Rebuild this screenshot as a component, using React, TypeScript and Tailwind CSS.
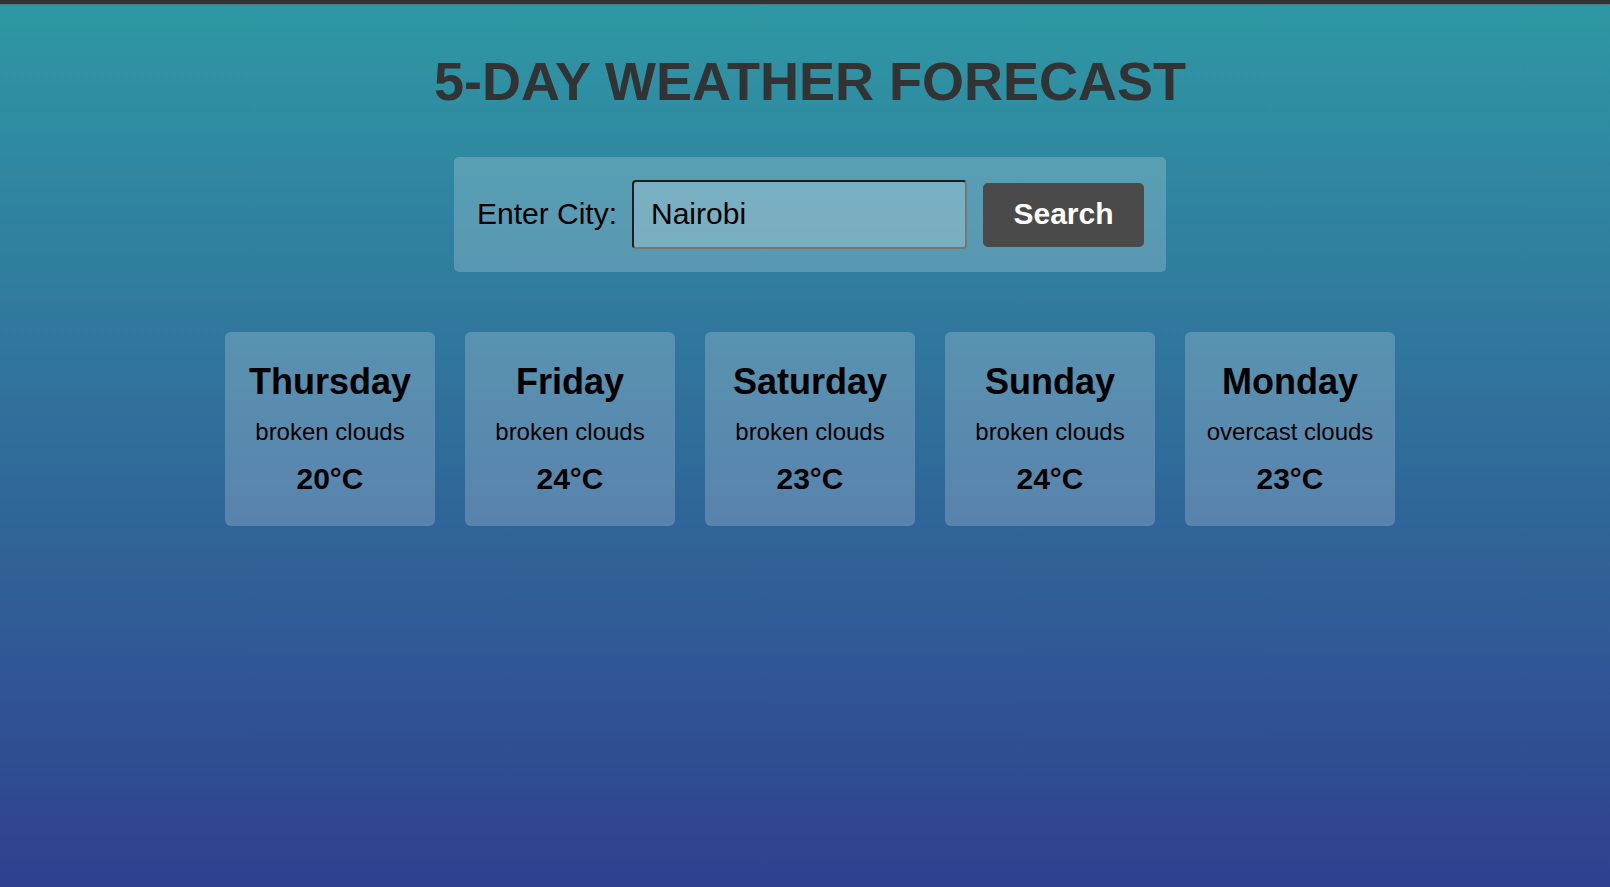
import React from "react";

const days = [
  { day: "Thursday", desc: "broken clouds", temp: "20°C" },
  { day: "Friday", desc: "broken clouds", temp: "24°C" },
  { day: "Saturday", desc: "broken clouds", temp: "23°C" },
  { day: "Sunday", desc: "broken clouds", temp: "24°C" },
  { day: "Monday", desc: "overcast clouds", temp: "23°C" },
];

export default function App() {
  return (
    <div
      className="min-h-screen w-full bg-gradient-to-b from-[#2e98a4] to-[#2f408e] text-black"
      style={{ fontFamily: '"Liberation Sans", Arial, sans-serif' }}
    >
      <div className="h-[4px] bg-[#333333]" />
      <div className="h-px bg-[#4e7a80]" />
      <div className="flex flex-col items-center pl-[10px]">
        <h1 className="mt-[45px] text-[54px] leading-[1.15] font-bold text-[#333333]">
          5-DAY WEATHER FORECAST
        </h1>
        <div className="mt-[45px] flex items-center rounded-[5px] bg-white/20 p-[23px] pr-[22px]">
          <label className="text-[30px] leading-[1.15]">Enter City:</label>
          <div className="ml-[15px] flex h-[69px] w-[335px] items-center rounded-[4px] border-2 border-t-[#1e1e1e] border-l-[#1e1e1e] border-b-[#767676] border-r-[#767676] bg-white/20 pl-[17px] text-[30px] leading-[1.15]">
            Nairobi
          </div>
          <button className="ml-[16px] flex h-[64px] w-[161px] items-center justify-center rounded-[5px] bg-[#4a4a4a] text-[30px] leading-[1.15] font-bold text-white">
            Search
          </button>
        </div>
        <div className="mt-[60px] flex gap-[30px]">
          {days.map((d) => (
            <div
              key={d.day}
              className="flex h-[194px] w-[210px] flex-col items-center rounded-[6px] bg-white/20 pt-[29px]"
            >
              <div className="text-[36px] leading-[1.15] font-bold">{d.day}</div>
              <div className="mt-[16px] text-[24px] leading-[1.15]">{d.desc}</div>
              <div className="mt-[16px] text-[30px] leading-[1.15] font-bold">{d.temp}</div>
            </div>
          ))}
        </div>
      </div>
    </div>
  );
}
